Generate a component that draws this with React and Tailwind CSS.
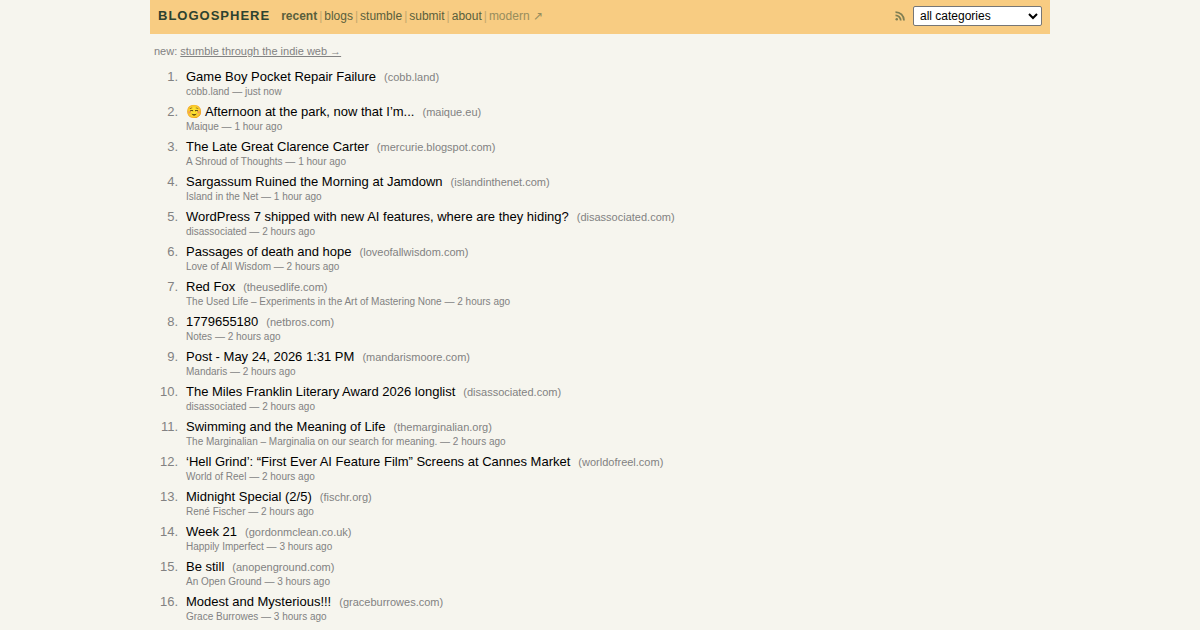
const NAV_LINKS = ['recent', 'blogs', 'stumble', 'submit', 'about'];

const POSTS = [
  { title: 'Game Boy Pocket Repair Failure', domain: 'cobb.land', blog: 'cobb.land', time: 'just now' },
  { title: '☺️ Afternoon at the park, now that I’m...', domain: 'maique.eu', blog: 'Maique', time: '1 hour ago' },
  { title: 'The Late Great Clarence Carter', domain: 'mercurie.blogspot.com', blog: 'A Shroud of Thoughts', time: '1 hour ago' },
  { title: 'Sargassum Ruined the Morning at Jamdown', domain: 'islandinthenet.com', blog: 'Island in the Net', time: '1 hour ago' },
  { title: 'WordPress 7 shipped with new AI features, where are they hiding?', domain: 'disassociated.com', blog: 'disassociated', time: '2 hours ago' },
  { title: 'Passages of death and hope', domain: 'loveofallwisdom.com', blog: 'Love of All Wisdom', time: '2 hours ago' },
  { title: 'Red Fox', domain: 'theusedlife.com', blog: 'The Used Life – Experiments in the Art of Mastering None', time: '2 hours ago' },
  { title: '1779655180', domain: 'netbros.com', blog: 'Notes', time: '2 hours ago' },
  { title: 'Post - May 24, 2026 1:31 PM', domain: 'mandarismoore.com', blog: 'Mandaris', time: '2 hours ago' },
  { title: 'The Miles Franklin Literary Award 2026 longlist', domain: 'disassociated.com', blog: 'disassociated', time: '2 hours ago' },
  { title: 'Swimming and the Meaning of Life', domain: 'themarginalian.org', blog: 'The Marginalian – Marginalia on our search for meaning.', time: '2 hours ago' },
  { title: '‘Hell Grind’: “First Ever AI Feature Film” Screens at Cannes Market', domain: 'worldofreel.com', blog: 'World of Reel', time: '2 hours ago' },
  { title: 'Midnight Special (2/5)', domain: 'fischr.org', blog: 'René Fischer', time: '2 hours ago' },
  { title: 'Week 21', domain: 'gordonmclean.co.uk', blog: 'Happily Imperfect', time: '3 hours ago' },
  { title: 'Be still', domain: 'anopenground.com', blog: 'An Open Ground', time: '3 hours ago' },
  { title: 'Modest and Mysterious!!!', domain: 'graceburrowes.com', blog: 'Grace Burrowes', time: '3 hours ago' },
];

function RssIcon() {
  return (
    <svg viewBox="0 0 24 24" className="size-3" fill="none" stroke="currentColor" strokeWidth="3.5">
      <path d="M3 10.5a10.5 10.5 0 0 1 10.5 10.5" />
      <path d="M3 4a17 17 0 0 1 17 17" />
      <circle cx="5.5" cy="18.5" r="2.5" fill="currentColor" stroke="none" />
    </svg>
  );
}

function Header() {
  return (
    <header className="flex items-center justify-between bg-[#f8cc82] px-2 h-[34px]">
      <div className="flex items-baseline gap-[11px] pb-0.5">
        <a href="/" className="text-[13px] font-bold tracking-[1px] text-[#2d4230]">BLOGOSPHERE</a>
        <nav className="flex items-center text-xs text-[#5a5f3c]">
          {NAV_LINKS.map((name) => (
            <span key={name} className="flex">
              <a href={`/${name}`} className={name === 'recent' ? 'font-bold' : ''}>{name}</a>
              <span className="px-0.5 text-[#c5a86d]">|</span>
            </span>
          ))}
          <a href="/modern" className="text-[#978d5d]">modern ↗</a>
        </nav>
      </div>
      <div className="flex items-center gap-[7px] pb-0.5">
        <a href="/feed" aria-label="RSS feed" className="text-[#7f7e52]">
          <RssIcon />
        </a>
        <select
          aria-label="Category"
          className="h-5 w-[129px] rounded-[2px] border border-[#767676] bg-white pl-0.5 text-xs text-black"
        >
          <option>all categories</option>
        </select>
      </div>
    </header>
  );
}

function Post({ rank, post }) {
  return (
    <li className="flex items-baseline gap-2">
      <span className="w-6 flex-shrink-0 text-right text-[13px] leading-[18px] text-[#828282]">{rank}.</span>
      <div className="min-w-0">
        <div className="flex items-baseline gap-2 text-[13px] leading-[18px]">
          <a href="#post" className="text-black">{post.title}</a>
          <a href="#site" className="text-[11px] leading-none text-[#828282]">({post.domain})</a>
        </div>
        <p className="text-[10px] leading-3 text-[#828282]">{post.blog} — {post.time}</p>
      </div>
    </li>
  );
}

export default function App() {
  return (
    <div className="min-h-screen bg-[#f6f5ee] font-['Liberation_Sans',Arial,sans-serif]">
      <div className="mx-auto max-w-[900px]">
        <Header />
        <main className="px-1 pt-2.5">
          <p className="text-[11px] leading-[14px] text-[#828282]">
            new: <a href="/stumble" className="underline">stumble through the indie web →</a>
          </p>
          <ol className="flex flex-col gap-[5px] pt-2.5">
            {POSTS.map((post, i) => (
              <Post key={post.title} rank={i + 1} post={post} />
            ))}
          </ol>
        </main>
      </div>
    </div>
  );
}
